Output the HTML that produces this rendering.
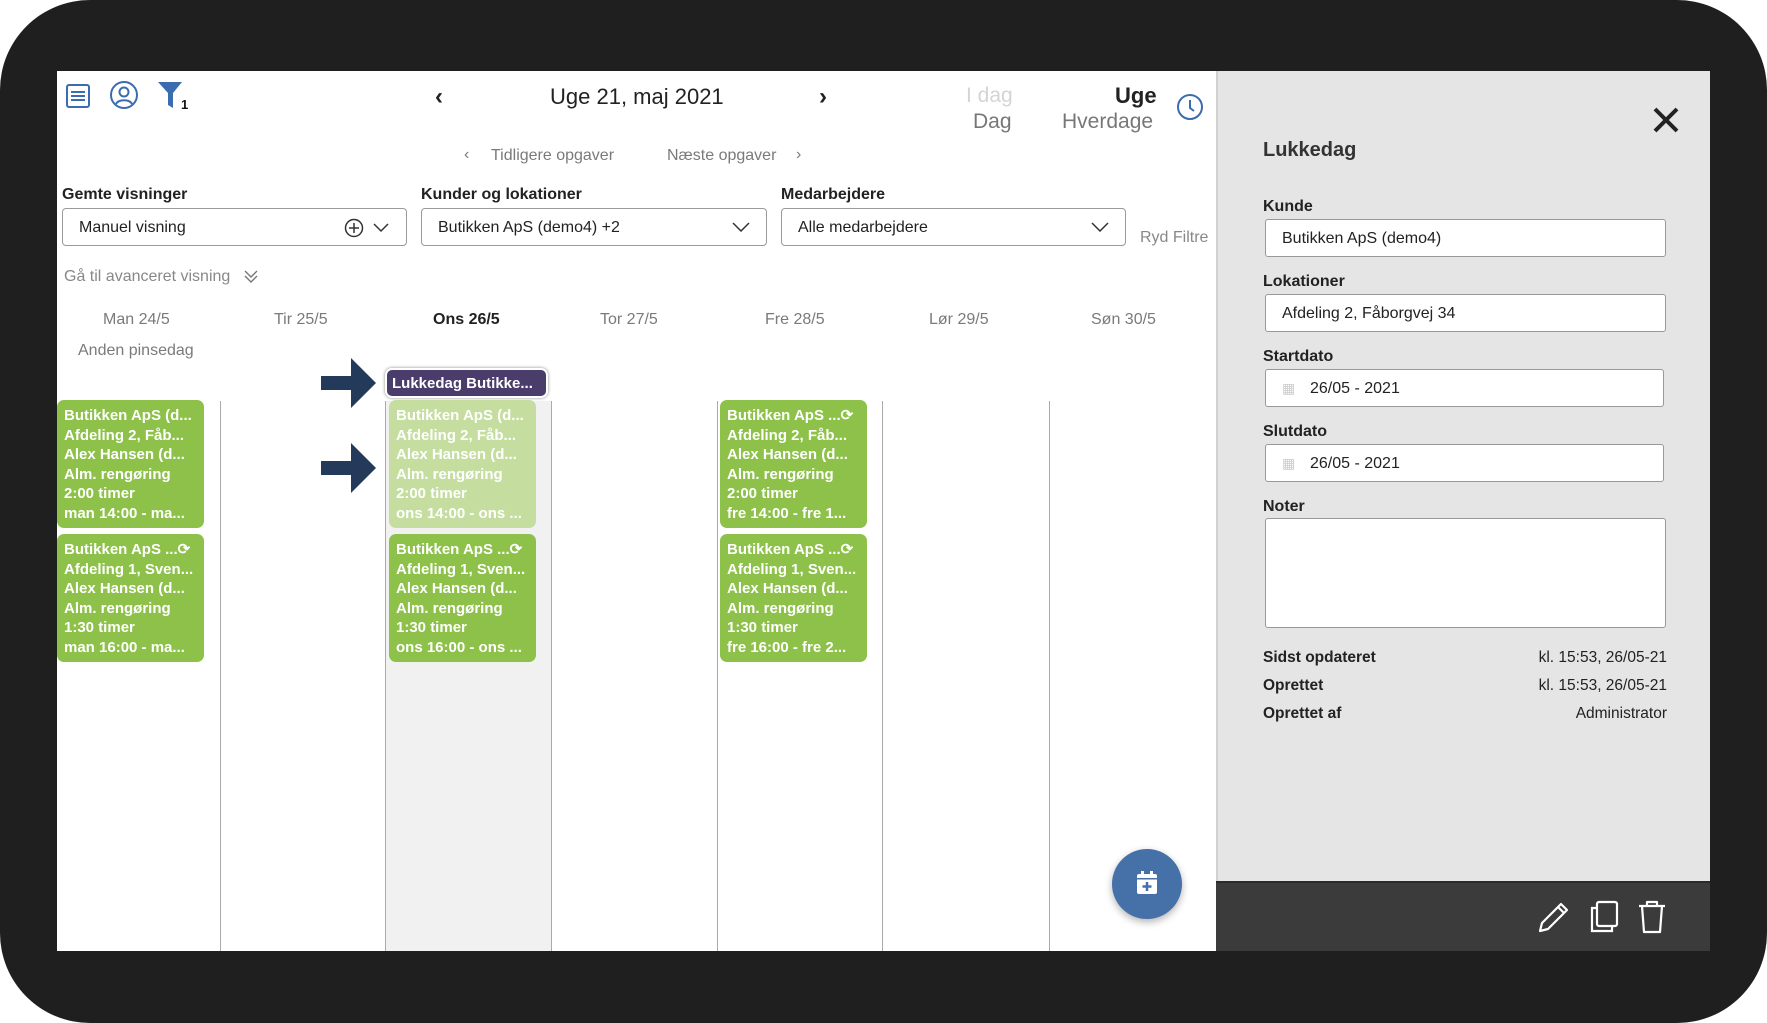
<!DOCTYPE html>
<html><head><meta charset="utf-8"><style>
*{margin:0;padding:0;box-sizing:border-box}
body{width:1767px;height:1023px;background:#fff;position:relative;overflow:hidden;font-family:"Liberation Sans",sans-serif;color:#222}
.frame{position:absolute;left:0;top:0;width:1767px;height:1023px;background:#1f1f1f;border-radius:90px}
.main{position:absolute;left:57px;top:71px;width:1159px;height:880px;background:#fff;overflow:hidden}
.side{position:absolute;left:1216px;top:71px;width:494px;height:810px;background:#e5e5e5;border-left:2px solid #d0d0d0}
.bar{position:absolute;left:1216px;top:881px;width:494px;height:70px;background:#3b3b3b;border-top:2px solid #2a2a2a}
.a{position:absolute;white-space:nowrap}
.dd{position:absolute;height:38px;border:1.5px solid #9a9a9a;border-radius:4px;background:#fff;font-size:16px;padding:10px 16px}
.lbl{font-size:16px;font-weight:bold;color:#222}
.g{color:#7a7a7a}
.col{position:absolute;top:330px;width:1px;height:560px;background:#aaa}
.card{position:absolute;width:147px;height:128px;background:#8dc149;border-radius:7px;color:#fff;font-weight:bold;font-size:15px;line-height:19.5px;padding:6px 7px;overflow:hidden;white-space:nowrap}
.inp{position:absolute;left:47px;width:401px;height:38px;background:#fff;border:1.5px solid #999;border-radius:3px;font-size:16px;padding:10px 16px}
.sl{position:absolute;left:47px;font-size:16px;font-weight:bold}
</style></head><body>
<div class="frame"></div>
<div class="main">
 <svg class="a" style="left:8px;top:12px" width="26" height="26" viewBox="0 0 26 26"><rect x="2" y="2" width="22" height="22" rx="2" fill="none" stroke="#3b6cb0" stroke-width="2"/><path d="M6 9h14M6 13h14M6 17h14" stroke="#3b6cb0" stroke-width="2"/></svg>
 <svg class="a" style="left:52px;top:9px" width="30" height="30" viewBox="0 0 30 30"><circle cx="15" cy="15" r="13" fill="none" stroke="#3b6cb0" stroke-width="2"/><circle cx="15" cy="12" r="4.5" fill="none" stroke="#3b6cb0" stroke-width="2"/><path d="M7 24c2-5 14-5 16 0" fill="none" stroke="#3b6cb0" stroke-width="2"/></svg>
 <svg class="a" style="left:100px;top:10px" width="32" height="30" viewBox="0 0 32 30"><path d="M1 1h24l-9 11v15l-5-3V12z" fill="#3b6cb0"/><text x="24" y="28" font-size="13" font-weight="bold" fill="#111" font-family="Liberation Sans">1</text></svg>
 <div class="a" style="left:378px;top:12px;font-size:24px;font-weight:bold">‹</div>
 <div class="a" style="left:493px;top:13px;font-size:22px">Uge 21, maj 2021</div>
 <div class="a" style="left:762px;top:12px;font-size:24px;font-weight:bold">›</div>
 <div class="a" style="left:909px;top:13px;font-size:21px;color:#d4d4d4">I dag</div>
 <div class="a" style="left:916px;top:39px;font-size:21px;color:#777">Dag</div>
 <div class="a" style="left:1058px;top:12px;font-size:22px;font-weight:bold">Uge</div>
 <div class="a" style="left:1005px;top:39px;font-size:21px;color:#777">Hverdage</div>
 <svg class="a" style="left:1119px;top:22px" width="28" height="28" viewBox="0 0 28 28"><circle cx="14" cy="14" r="12" fill="none" stroke="#3b6cb0" stroke-width="2"/><path d="M14 7v8l4 3" fill="none" stroke="#3b6cb0" stroke-width="2"/></svg>
 <div class="a g" style="left:407px;top:75px;font-size:16px">‹</div>
 <div class="a g" style="left:434px;top:76px;font-size:16px">Tidligere opgaver</div>
 <div class="a g" style="left:610px;top:76px;font-size:16px">Næste opgaver</div>
 <div class="a g" style="left:739px;top:75px;font-size:16px">›</div>
 <div class="a lbl" style="left:5px;top:115px">Gemte visninger</div>
 <div class="a lbl" style="left:364px;top:115px">Kunder og lokationer</div>
 <div class="a lbl" style="left:724px;top:115px">Medarbejdere</div>
 <div class="dd" style="left:5px;top:137px;width:345px">Manuel visning
  <svg class="a" style="left:281px;top:9px" width="48" height="20" viewBox="0 0 48 20"><circle cx="10" cy="10" r="8.5" fill="none" stroke="#333" stroke-width="1.5"/><path d="M10 5v10M5 10h10" stroke="#333" stroke-width="1.5"/><path d="M30 6l7 7 7-7" fill="none" stroke="#333" stroke-width="1.5"/></svg></div>
 <div class="dd" style="left:364px;top:137px;width:346px">Butikken ApS (demo4) +2
  <svg class="a" style="left:310px;top:13px" width="18" height="10" viewBox="0 0 18 10"><path d="M1 1l8 8 8-8" fill="none" stroke="#333" stroke-width="1.5"/></svg></div>
 <div class="dd" style="left:724px;top:137px;width:345px">Alle medarbejdere
  <svg class="a" style="left:309px;top:13px" width="18" height="10" viewBox="0 0 18 10"><path d="M1 1l8 8 8-8" fill="none" stroke="#333" stroke-width="1.5"/></svg></div>
 <div class="a g" style="left:1083px;top:158px;font-size:16px;color:#888">Ryd Filtre</div>
 <div class="a g" style="left:7px;top:197px;font-size:16px;color:#888">Gå til avanceret visning</div>
 <svg class="a" style="left:186px;top:197px" width="16" height="16" viewBox="0 0 16 16"><path d="M2 3l6 6 6-6M2 8l6 6 6-6" fill="none" stroke="#777" stroke-width="1.4"/></svg>
 <div class="a" style="left:328px;top:330px;width:166px;height:560px;background:#f1f1f1"></div>
 <div class="col" style="left:163px"></div><div class="col" style="left:328px"></div><div class="col" style="left:494px"></div><div class="col" style="left:660px"></div><div class="col" style="left:825px"></div><div class="col" style="left:992px"></div>
 <div class="a g" style="left:46px;top:240px;font-size:16px">Man 24/5</div>
 <div class="a g" style="left:217px;top:240px;font-size:16px">Tir 25/5</div>
 <div class="a" style="left:376px;top:240px;font-size:16px;font-weight:bold">Ons 26/5</div>
 <div class="a g" style="left:543px;top:240px;font-size:16px">Tor 27/5</div>
 <div class="a g" style="left:708px;top:240px;font-size:16px">Fre 28/5</div>
 <div class="a g" style="left:872px;top:240px;font-size:16px">Lør 29/5</div>
 <div class="a g" style="left:1034px;top:240px;font-size:16px">Søn 30/5</div>
 <div class="a g" style="left:21px;top:271px;font-size:16px">Anden pinsedag</div>
 <svg class="a" style="left:264px;top:287px" width="56" height="50" viewBox="0 0 56 50"><path d="M0 18h30V0l25 25-25 25V32H0z" fill="#233a5a"/></svg>
 <svg class="a" style="left:264px;top:372px" width="56" height="50" viewBox="0 0 56 50"><path d="M0 18h30V0l25 25-25 25V32H0z" fill="#233a5a"/></svg>
 <div class="a" style="left:328px;top:297px;width:163px;height:30px;background:#4a3d6b;border:2px solid #fff;box-shadow:0 0 3px #888;border-radius:7px;color:#fff;font-weight:bold;font-size:15px;padding:5px 5px">Lukkedag Butikke...</div>
 <div class="card" style="left:0;top:329px">Butikken ApS (d...<br>Afdeling 2, Fåb...<br>Alex Hansen (d...<br>Alm. rengøring<br>2:00 timer<br>man 14:00 - ma...</div>
 <div class="card" style="left:0;top:463px">Butikken ApS ...⟳<br>Afdeling 1, Sven...<br>Alex Hansen (d...<br>Alm. rengøring<br>1:30 timer<br>man 16:00 - ma...</div>
 <div class="card" style="left:332px;top:329px;background:#c5dea0">Butikken ApS (d...<br>Afdeling 2, Fåb...<br>Alex Hansen (d...<br>Alm. rengøring<br>2:00 timer<br>ons 14:00 - ons ...</div>
 <div class="card" style="left:332px;top:463px">Butikken ApS ...⟳<br>Afdeling 1, Sven...<br>Alex Hansen (d...<br>Alm. rengøring<br>1:30 timer<br>ons 16:00 - ons ...</div>
 <div class="card" style="left:663px;top:329px">Butikken ApS ...⟳<br>Afdeling 2, Fåb...<br>Alex Hansen (d...<br>Alm. rengøring<br>2:00 timer<br>fre 14:00 - fre 1...</div>
 <div class="card" style="left:663px;top:463px">Butikken ApS ...⟳<br>Afdeling 1, Sven...<br>Alex Hansen (d...<br>Alm. rengøring<br>1:30 timer<br>fre 16:00 - fre 2...</div>
 <div class="a" style="left:1055px;top:778px;width:70px;height:70px;border-radius:50%;background:#4670a8;box-shadow:0 3px 8px rgba(0,0,0,.3)"></div>
 <svg class="a" style="left:1078px;top:799px" width="24" height="26" viewBox="0 0 24 26"><rect x="2" y="4" width="20" height="20" rx="2" fill="#fff"/><rect x="6" y="1" width="3" height="6" fill="#fff"/><rect x="15" y="1" width="3" height="6" fill="#fff"/><rect x="2" y="8" width="20" height="1.5" fill="#4670a8"/><path d="M12 12v9M7.5 16.5h9" stroke="#4670a8" stroke-width="2.5"/></svg>
</div>
<div class="side">
 <svg class="a" style="left:434px;top:35px" width="28" height="28" viewBox="0 0 28 28"><path d="M3 3l22 22M25 3L3 25" stroke="#222" stroke-width="4"/></svg>
 <div class="a" style="left:45px;top:68px;font-size:20px;font-weight:bold;color:#333">Lukkedag</div>
 <div class="sl" style="left:45px;top:127px">Kunde</div>
 <div class="inp" style="top:148px">Butikken ApS (demo4)</div>
 <div class="sl" style="left:45px;top:202px">Lokationer</div>
 <div class="inp" style="top:223px">Afdeling 2, Fåborgvej 34</div>
 <div class="sl" style="left:45px;top:277px">Startdato</div>
 <div class="inp" style="top:298px;width:399px;padding-left:44px">26/05 - 2021<span class="a" style="left:16px;top:10px;font-size:14px;color:#ccc">▦</span></div>
 <div class="sl" style="left:45px;top:352px">Slutdato</div>
 <div class="inp" style="top:373px;width:399px;padding-left:44px">26/05 - 2021<span class="a" style="left:16px;top:10px;font-size:14px;color:#ccc">▦</span></div>
 <div class="sl" style="left:45px;top:427px">Noter</div>
 <div class="inp" style="top:447px;height:110px"></div>
 <div class="sl" style="left:45px;top:578px;font-size:15.5px">Sidst opdateret</div>
 <div class="a" style="right:43px;top:578px;font-size:15.5px">kl. 15:53, 26/05-21</div>
 <div class="sl" style="left:45px;top:606px;font-size:15.5px">Oprettet</div>
 <div class="a" style="right:43px;top:606px;font-size:15.5px">kl. 15:53, 26/05-21</div>
 <div class="sl" style="left:45px;top:634px;font-size:15.5px">Oprettet af</div>
 <div class="a" style="right:43px;top:634px;font-size:15.5px">Administrator</div>
</div>
<div class="bar">
 <svg class="a" style="left:320px;top:16px" width="36" height="36" viewBox="0 0 36 36"><path d="M4 32l2-8L25 5l6 6-19 19z M22 8l6 6" fill="none" stroke="#fff" stroke-width="2.2" stroke-linejoin="round"/></svg>
 <svg class="a" style="left:370px;top:16px" width="36" height="36" viewBox="0 0 36 36"><rect x="11" y="3" width="20" height="24" rx="2" fill="none" stroke="#fff" stroke-width="2.2"/><path d="M11 9H6v23h20v-5" fill="none" stroke="#fff" stroke-width="2.2"/></svg>
 <svg class="a" style="left:420px;top:16px" width="32" height="36" viewBox="0 0 32 36"><path d="M3 7h26M11 7V3h10v4M6 7l2 26h16l2-26" fill="none" stroke="#fff" stroke-width="2.2" stroke-linejoin="round"/></svg>
</div>
</body></html>
